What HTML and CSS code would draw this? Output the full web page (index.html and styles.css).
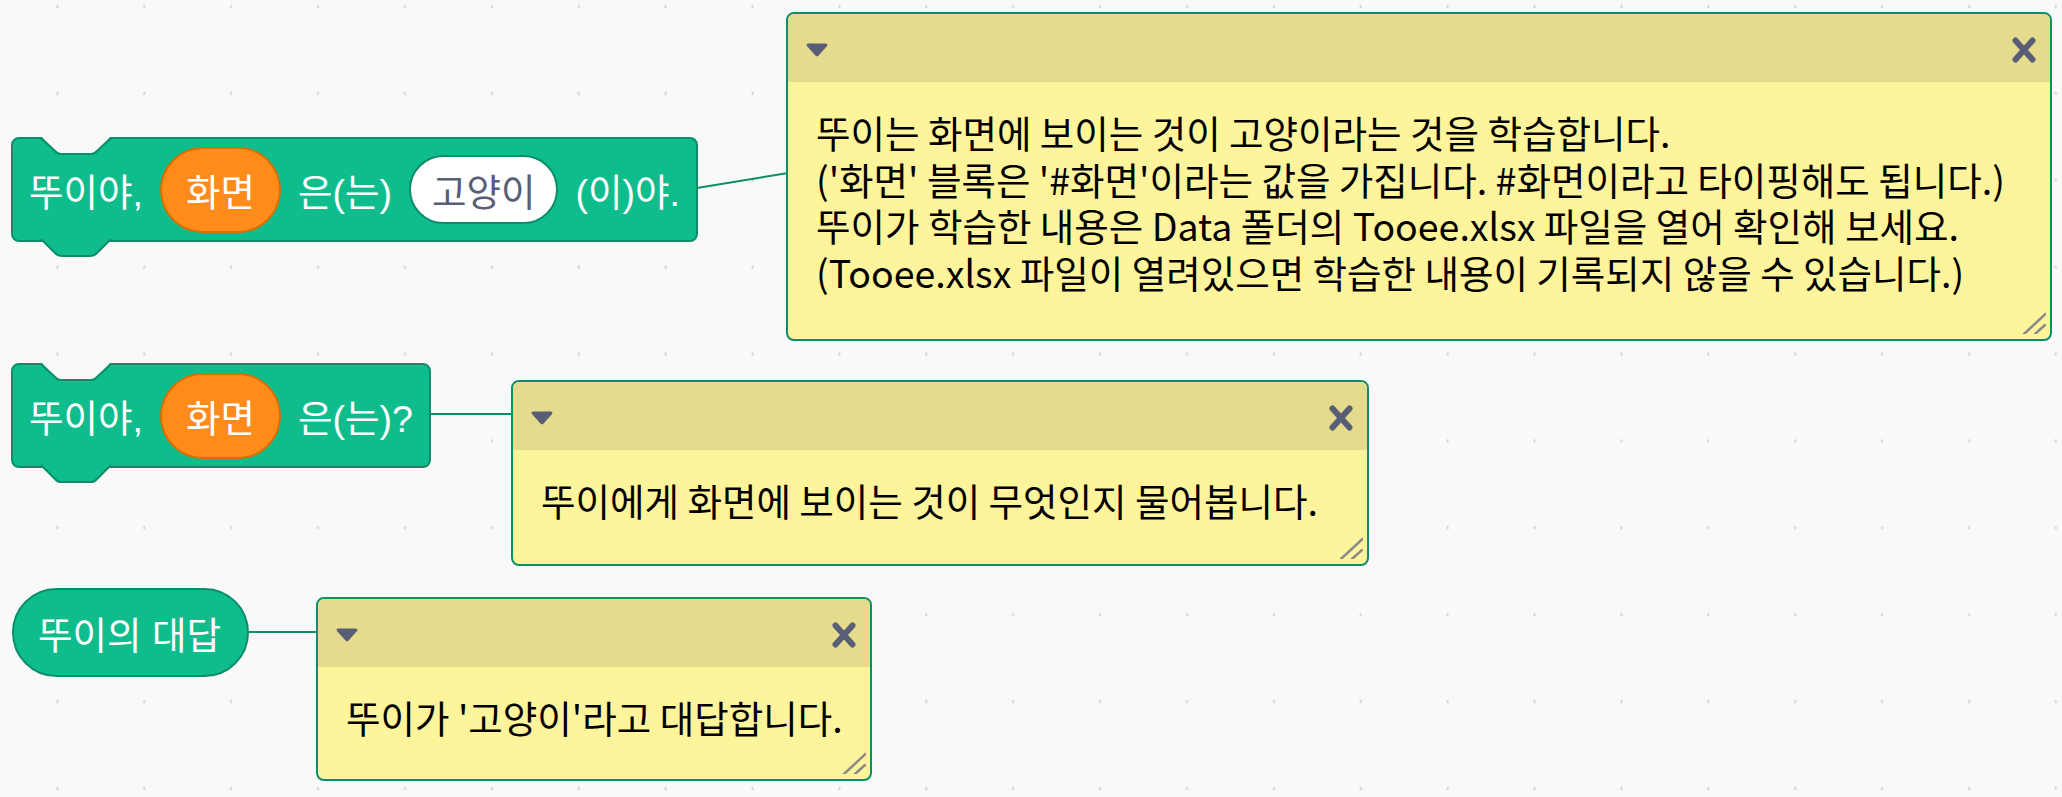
FILE: index.html
```html
<!DOCTYPE html>
<html>
<head>
<title>Tooee Blocks</title>
<meta charset="UTF-8">
<meta name="viewport" content="width=device-width, initial-scale=1.0">
<link rel="stylesheet" href="styles.css">
</head>
<body>
<div class="workspace">
<svg class="wires" width="2062" height="797">
<line x1="697" y1="188" x2="788" y2="173"/>
<line x1="427" y1="414" x2="512" y2="414"/>
<line x1="247" y1="632" x2="317" y2="632"/>
</svg>

<div class="block block-1">
<svg class="notch-top" width="110" height="22"><path class="cut" d="M30 -1 L44 14 Q46.5 17 50 17 L80 17 Q83.5 17 86 14 L100 -1 Z"/><path class="edge" d="M30 1 L44 14 Q46.5 17 50 17 L80 17 Q83.5 17 86 14 L100 1"/></svg>
<span>뚜이야,</span>
<span class="pill-orange">화면</span>
<span>은(는)</span>
<span class="pill-white">고양이</span>
<span>(이)야.</span>
<svg class="notch-bottom" width="110" height="22"><path class="tab" d="M29 0 L44 15 Q46.5 18 50 18 L80 18 Q83.5 18 86 15 L101 0 Z"/><path class="edge" d="M30 1 L44 15 Q46.5 18 50 18 L80 18 Q83.5 18 86 15 L100 1"/></svg>
</div>

<div class="block block-2">
<svg class="notch-top" width="110" height="22"><path class="cut" d="M30 -1 L44 14 Q46.5 17 50 17 L80 17 Q83.5 17 86 14 L100 -1 Z"/><path class="edge" d="M30 1 L44 14 Q46.5 17 50 17 L80 17 Q83.5 17 86 14 L100 1"/></svg>
<span>뚜이야,</span>
<span class="pill-orange">화면</span>
<span>은(는)?</span>
<svg class="notch-bottom" width="110" height="22"><path class="tab" d="M29 0 L44 15 Q46.5 18 50 18 L80 18 Q83.5 18 86 15 L101 0 Z"/><path class="edge" d="M30 1 L44 15 Q46.5 18 50 18 L80 18 Q83.5 18 86 15 L100 1"/></svg>
</div>

<div class="reporter">뚜이의 대답</div>

<div class="comment comment-1">
<div class="comment-head">
<svg width="24" height="16" viewBox="0 0 24 16"><path d="M3.5 1.5 H20.5 Q23.5 1.5 21.8 4.2 L13.6 13.6 Q12 15.2 10.4 13.6 L2.2 4.2 Q0.5 1.5 3.5 1.5Z" fill="#575e75"/></svg>
<svg width="26" height="26" viewBox="0 0 26 26"><path d="M4.5 3.5 L21.5 22.5 M21.5 3.5 L4.5 22.5" stroke="#575e75" stroke-width="6" stroke-linecap="round"/></svg>
</div>
<div class="comment-body">뚜이는 화면에 보이는 것이 고양이라는 것을 학습합니다.<br>('화면' 블록은 '#화면'이라는 값을 가집니다. #화면이라고 타이핑해도 됩니다.)<br>뚜이가 학습한 내용은 Data 폴더의 Tooee.xlsx 파일을 열어 확인해 보세요.<br>(Tooee.xlsx 파일이 열려있으면 학습한 내용이 기록되지 않을 수 있습니다.)</div>
<svg class="grip" width="24" height="24"><path d="M23.5 4 L2 24 M23 15 L13 24"/></svg>
</div>

<div class="comment comment-2">
<div class="comment-head">
<svg width="24" height="16" viewBox="0 0 24 16"><path d="M3.5 1.5 H20.5 Q23.5 1.5 21.8 4.2 L13.6 13.6 Q12 15.2 10.4 13.6 L2.2 4.2 Q0.5 1.5 3.5 1.5Z" fill="#575e75"/></svg>
<svg width="26" height="26" viewBox="0 0 26 26"><path d="M4.5 3.5 L21.5 22.5 M21.5 3.5 L4.5 22.5" stroke="#575e75" stroke-width="6" stroke-linecap="round"/></svg>
</div>
<div class="comment-body">뚜이에게 화면에 보이는 것이 무엇인지 물어봅니다.</div>
<svg class="grip" width="24" height="24"><path d="M23.5 4 L2 24 M23 15 L13 24"/></svg>
</div>

<div class="comment comment-3">
<div class="comment-head">
<svg width="24" height="16" viewBox="0 0 24 16"><path d="M3.5 1.5 H20.5 Q23.5 1.5 21.8 4.2 L13.6 13.6 Q12 15.2 10.4 13.6 L2.2 4.2 Q0.5 1.5 3.5 1.5Z" fill="#575e75"/></svg>
<svg width="26" height="26" viewBox="0 0 26 26"><path d="M4.5 3.5 L21.5 22.5 M21.5 3.5 L4.5 22.5" stroke="#575e75" stroke-width="6" stroke-linecap="round"/></svg>
</div>
<div class="comment-body">뚜이가 '고양이'라고 대답합니다.</div>
<svg class="grip" width="24" height="24"><path d="M23.5 4 L2 24 M23 15 L13 24"/></svg>
</div>
</div>
</body>
</html>
```

FILE: styles.css
```css
body{
    margin: 0;
    font-family: "Liberation Sans", "Noto Sans CJK KR", sans-serif;
}
.workspace{
    position: relative;
    width: 2062px;
    height: 797px;
    overflow: hidden;
    background-color: #f9f9f9;
    background-image: radial-gradient(ellipse 1.3px 2.3px, #d2d2d2 60%, transparent 100%);
    background-size: 86.9px 86.9px;
    background-position: 13.95px 49.95px;
}
.wires{
    position: absolute;
    left: 0;
    top: 0;
}
.wires line{
    stroke: #0b8e69;
    stroke-width: 2;
}

/* stack blocks */
.block{
    position: absolute;
    display: flex;
    align-items: center;
    gap: 17px;
    box-sizing: border-box;
    height: 105px;
    padding: 0 16px 0 16px;
    background: #0fbd8c;
    border: 2px solid #0b8e69;
    border-radius: 8px;
    color: #fff;
    font-size: 37.5px;
    white-space: nowrap;
}
.block-1{
    left: 11px;
    top: 137px;
}
.block-2{
    left: 11px;
    top: 363px;
}
.notch-top{
    position: absolute;
    left: -2px;
    top: -2px;
}
.notch-bottom{
    position: absolute;
    left: -2px;
    bottom: -20px;
}
.notch-top .cut{
    fill: #f9f9f9;
}
.notch-bottom .tab{
    fill: #0fbd8c;
}
.notch-top .edge,
.notch-bottom .edge{
    fill: none;
    stroke: #0b8e69;
    stroke-width: 2;
}
.pill-orange{
    display: flex;
    align-items: center;
    box-sizing: border-box;
    height: 86px;
    padding: 0 24px;
    background: #ff8c1a;
    border: 2px solid #db6e00;
    border-radius: 43px;
}
.pill-white{
    display: flex;
    align-items: center;
    box-sizing: border-box;
    height: 69px;
    padding: 0 21px;
    background: #fff;
    border: 2px solid #0b8e69;
    border-radius: 35px;
    color: #575e75;
}
.reporter{
    position: absolute;
    left: 12px;
    top: 588px;
    display: flex;
    align-items: center;
    box-sizing: border-box;
    height: 89px;
    padding: 0 26px 0 24px;
    background: #0fbd8c;
    border: 2px solid #0b8e69;
    border-radius: 45px;
    color: #fff;
    font-size: 37.5px;
    white-space: nowrap;
}

/* comments */
.comment{
    position: absolute;
    box-sizing: border-box;
    display: flex;
    flex-direction: column;
    background: #fef49c;
    border: 2px solid #0b8e69;
    border-radius: 8px;
    overflow: hidden;
}
.comment-1{
    left: 786px;
    top: 12px;
    width: 1266px;
    height: 329px;
}
.comment-2{
    left: 511px;
    top: 380px;
    width: 858px;
    height: 186px;
}
.comment-3{
    left: 316px;
    top: 597px;
    width: 556px;
    height: 184px;
}
.comment-head{
    display: flex;
    align-items: center;
    justify-content: space-between;
    height: 68px;
    flex-shrink: 0;
    padding: 3px 13px 0 17px;
    box-sizing: border-box;
    background: #e4db8c;
}
.comment-body{
    padding: 27px 28px;
    font-family: "Noto Sans CJK KR", "Liberation Sans", sans-serif;
    font-size: 37.5px;
    line-height: 46.5px;
    color: #000;
    white-space: nowrap;
}
.grip{
    position: absolute;
    right: 4px;
    bottom: 5px;
}
.grip path{
    stroke: #8a8a8a;
    stroke-width: 2.5;
    stroke-linecap: round;
}
```
